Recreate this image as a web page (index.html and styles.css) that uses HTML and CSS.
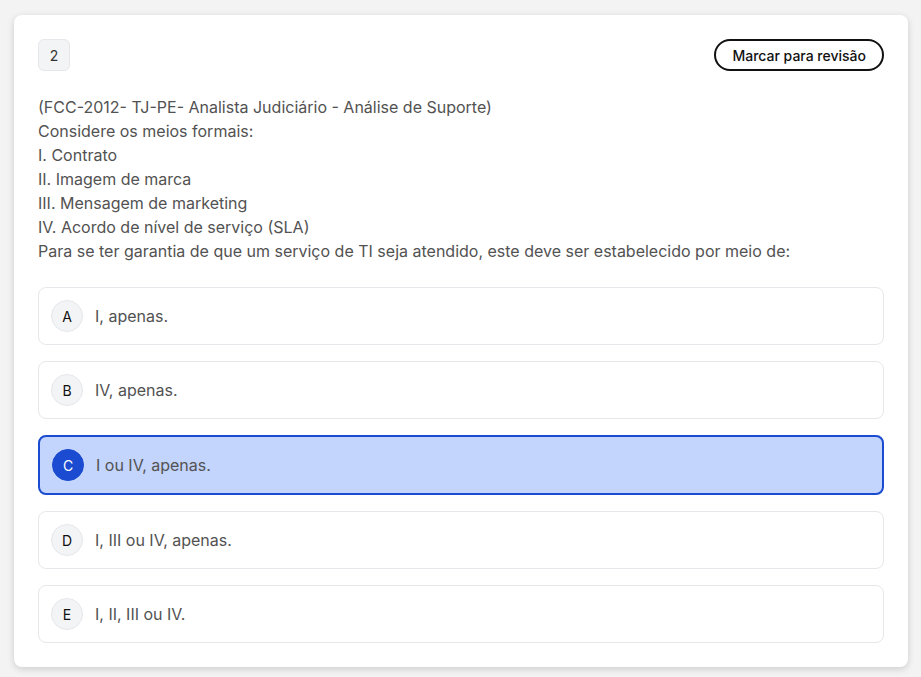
FILE: index.html
```html
<!DOCTYPE html>
<html lang="pt">
<head>
<meta charset="utf-8">
<title>Questão 2</title>
<link rel="stylesheet" href="styles.css">
</head>
<body>
<main class="card">
  <div class="head">
    <span class="num">2</span>
    <button class="mark">Marcar para revisão</button>
  </div>
  <div class="stem">
    <p>(FCC-2012- TJ-PE- Analista Judiciário - Análise de Suporte)</p>
    <p>Considere os meios formais:</p>
    <p>I. Contrato</p>
    <p>II. Imagem de marca</p>
    <p>III. Mensagem de marketing</p>
    <p>IV. Acordo de nível de serviço (SLA)</p>
    <p>Para se ter garantia de que um serviço de TI seja atendido, este deve ser estabelecido por meio de:</p>
  </div>
  <ul class="opts">
    <li class="opt"><span class="letter">A</span><span class="txt">I, apenas.</span></li>
    <li class="opt"><span class="letter">B</span><span class="txt">IV, apenas.</span></li>
    <li class="opt selected"><span class="letter">C</span><span class="txt">I ou IV, apenas.</span></li>
    <li class="opt"><span class="letter">D</span><span class="txt">I, III ou IV, apenas.</span></li>
    <li class="opt"><span class="letter">E</span><span class="txt">I, II, III ou IV.</span></li>
  </ul>
</main>
</body>
</html>
```

FILE: styles.css
```css
* { box-sizing: border-box; }
html, body { margin: 0; }
body {
  background: #f3f3f3;
  font-family: Inter, "Noto Sans", sans-serif;
  padding: 15px 13px 10px 14px;
}
.card {
  background: #fff;
  border-radius: 8px;
  box-shadow: 0 2px 7px rgba(0,0,0,0.16);
  padding: 24px;
}
.head {
  display: flex;
  justify-content: space-between;
  align-items: center;
  margin-bottom: 24px;
}
.num {
  width: 32px;
  height: 32px;
  display: flex;
  align-items: center;
  justify-content: center;
  background: #f3f4f6;
  border: 1px solid #e5e7eb;
  border-radius: 6px;
  font-size: 14px;
  color: #333;
}
.mark {
  height: 32px;
  padding: 0 16px;
  border: 2px solid #111;
  border-radius: 999px;
  background: #fff;
  font-family: Inter, sans-serif;
  font-size: 14px;
  font-weight: 500;
  color: #111;
}
.stem {
  color: #525252;
  font-size: 16px;
  line-height: 24px;
  margin-bottom: 24px;
}
.stem p { margin: 0; }
.opts {
  list-style: none;
  margin: 0;
  padding: 0;
  display: flex;
  flex-direction: column;
  gap: 16px;
}
.opt {
  display: flex;
  align-items: center;
  gap: 12px;
  padding: 12px;
  border: 1px solid #e5e7eb;
  border-radius: 8px;
  background: #fff;
}
.letter {
  width: 32px;
  height: 32px;
  flex: none;
  border-radius: 50%;
  background: #f3f4f6;
  border: 1px solid #e5e7eb;
  display: flex;
  align-items: center;
  justify-content: center;
  font-size: 14px;
  color: #111;
}
.txt {
  font-size: 16px;
  line-height: 24px;
  color: #525252;
}
.opt.selected {
  border: 2px solid #1a4bd0;
  background: #c3d4fd;
}
.opt.selected .letter {
  background: #1a4bd0;
  border-color: #1a4bd0;
  color: #fff;
}
```
